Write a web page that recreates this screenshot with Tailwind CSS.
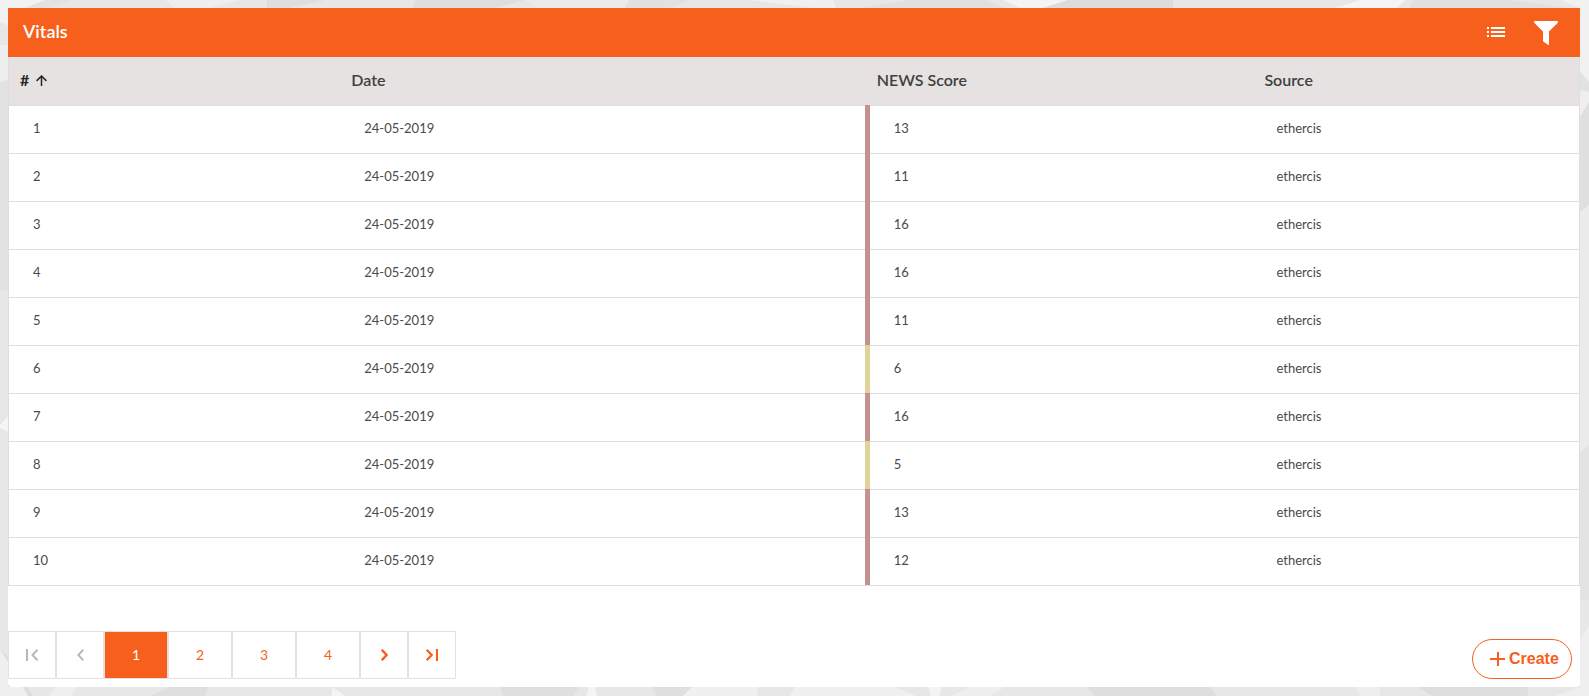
<!DOCTYPE html>
<html lang="en">
<head>
<meta charset="utf-8">
<meta name="viewport" content="width=device-width, initial-scale=1">
<title>Vitals</title>
<script src="https://cdn.jsdelivr.net/npm/@tailwindcss/browser@4"></script>
</head>
<body class="relative isolate min-h-screen bg-[#e7e7e7] p-2 pr-[9px] pb-[9px] font-['Lato',sans-serif] text-[#4a4a4a]">
<!-- Faceted page backdrop -->
<svg class="absolute inset-0 -z-10 h-full w-full opacity-80" viewBox="0 0 1589 696" preserveAspectRatio="none" aria-hidden="true">
  <path fill="#f5f5f5" d="M0 0H73L20 12L12 27L0 22z"/>
  <path fill="#e1e1e1" d="M45 0H73L50 8H25zM0 82L8 79V171L0 182z"/>
  <path fill="#f0f0f0" d="M0 45H8V80L0 82zM165 0H240L210 8H175z"/>
  <path fill="#dcdcdc" d="M267 0H325L290 8H267z"/>
  <path fill="#e2e2e2" d="M0 182L8 171V290H0z"/>
  <path fill="#dcdcdc" d="M415 0H525L495 8H413z"/>
  <path fill="#ededed" d="M527 0H628L625 8H537z"/>
  <path fill="#e0e0e0" d="M630 0H690L670 8H625z"/>
  <path fill="#f3f3f3" d="M750 0H833L836 8H815z"/>
  <path fill="#dfdfdf" d="M910 0H985L1005 8H860z"/>
  <path fill="#f8f8f8" d="M1003 0H1068L1043 8H1020z"/>
  <path fill="#dadada" d="M1068 0H1173V8H1043z"/>
  <path fill="#f9f9f9" d="M1360 0H1405L1397 8H1335z"/>
  <path fill="#dfdfdf" d="M1413 0H1510L1570 8H1410z"/>
  <path fill="#f4f4f4" d="M1560 0H1589V82L1580 72V8z"/>
  <path fill="#e1e1e1" d="M1580 72L1589 82V92L1580 90z"/>
  <path fill="#f2f2f2" d="M1580 90L1589 92V102L1580 117z"/>
  <path fill="#dedede" d="M1580 117L1589 102V205L1580 212z"/>
  <path fill="#eeeeee" d="M1580 212L1589 205V445L1580 453z"/>
  <path fill="#e3e3e3" d="M1580 453L1589 445V600H1580z"/>
  <path fill="#f9f9f9" d="M0 425L8 416V432L0 428z"/>
  <path fill="#f3f3f3" d="M0 649L35 696H0z"/>
  <path fill="#dddddd" d="M0 649L8 657V687H28L34 696H50L55 687H75L65 696H28z"/>
  <path fill="#f1f1f1" d="M55 687H77L71 696H49z"/>
  <path fill="#dedede" d="M170 687H208L205 696H150zM500 687H579L573 696H503zM651 687H692L683 696H657z"/>
  <path fill="#f8f8f8" d="M332 687L345 696H332zM589 687H595L597 696H586zM928 687H942L939 696H931z"/>
  <path fill="#f3f3f3" d="M692 687H758L757 696H683zM795 687H895L916 696H790z"/>
  <path fill="#f0f0f0" d="M970 687H1005L990 696H950zM1355 687H1380V696H1360z"/>
  <path fill="#dddddd" d="M1087 687H1210L1217 696H1095zM1418 687H1529L1527 696H1432z"/>
  <path fill="#f1f1f1" d="M1580 640L1589 625V696H1555L1580 687z"/>
</svg>

<main class="min-h-full overflow-hidden rounded-b bg-white">
  <header class="flex h-[49px] items-center justify-between bg-[#f7601c] pr-[22px] pl-[15px] text-white">
    <h1 class="pb-[3px] text-lg leading-6 font-semibold">Vitals</h1>
    <div class="flex items-center gap-[29px]">
      <button type="button" aria-label="List view">
        <svg class="block h-[11px] w-[18px]" viewBox="0 0 18 11" fill="currentColor" shape-rendering="crispEdges"><path d="M0 0h2v2H0zM0 4h2v2H0zM0 8h2v2H0zM4 0h14v2H4zM4 4h14v2H4zM4 8h14v2H4z"/></svg>
      </button>
      <button type="button" aria-label="Filter">
        <svg class="block h-6 w-6" viewBox="0 0 24 24" fill="currentColor"><path d="M.8 0H23.2Q24.6.6 23.6 2L15 10.600V23.400Q14.700 24.300 13.800 23.700L9.600 20.700Q9 20.200 9 19.500V10.600L.4 2Q-.6.6.8 0z"/></svg>
      </button>
    </div>
  </header>

  <table class="w-full table-fixed border-separate border-spacing-0 border-x border-b border-[#dedede] text-left">
    <colgroup><col class="w-[21.1%]"><col class="w-[33.4%]"><col class="w-[24.7%]"><col></colgroup>
    <thead class="bg-[#e6e2e1] text-base leading-6 text-[#404040]">
      <tr class="h-12">
        <th scope="col" class="p-0 pb-0.5 pl-[11px] font-bold text-[#262626]" aria-sort="ascending">
          <button type="button" class="flex items-center gap-[7px]">#
            <svg class="h-[11px] w-[11px]" viewBox="0 0 11 11" fill="none" stroke="currentColor" stroke-width="1.500"><path d="M5.500 11V1M.6 5.900L5.500 1L10.400 5.900"/></svg>
          </button>
        </th>
        <th scope="col" class="p-0 pb-0.5 pl-[11px] font-semibold">Date</th>
        <th scope="col" class="p-0 pb-0.5 pl-3 font-semibold">NEWS Score</th>
        <th scope="col" class="p-0 pb-0.5 pl-3 font-semibold">Source</th>
      </tr>
    </thead>
    <tbody id="rows" class="text-[13px] leading-5"></tbody>
  </table>

  <footer class="flex items-end justify-between pt-[45px] pr-2 pb-2">
    <nav aria-label="Pages" class="flex text-sm text-[#f7601c]">
      <button type="button" disabled aria-label="First page" class="flex h-12 w-12 items-center justify-center border border-[#e1e1e1] text-[#b8b8b8]">
        <svg class="h-3 w-3" viewBox="0 0 12 12" fill="none" stroke="currentColor" stroke-width="2"><path d="M1 0V12M11.500.8L6.500 6L11.500 11.200"/></svg>
      </button>
      <button type="button" disabled aria-label="Previous page" class="flex h-12 w-12 items-center justify-center border border-[#e1e1e1] text-[#b8b8b8]">
        <svg class="h-3 w-[7px]" viewBox="0 0 7 12" fill="none" stroke="currentColor" stroke-width="2"><path d="M6.300.8L1.300 6L6.300 11.200"/></svg>
      </button>
      <button type="button" aria-current="page" class="h-12 w-16 border border-[#e1e1e1] bg-[#f7601c] text-white">1</button>
      <button type="button" class="h-12 w-16 border border-[#e1e1e1]">2</button>
      <button type="button" class="h-12 w-16 border border-[#e1e1e1]">3</button>
      <button type="button" class="h-12 w-16 border border-[#e1e1e1]">4</button>
      <button type="button" aria-label="Next page" class="flex h-12 w-12 items-center justify-center border border-[#e1e1e1]">
        <svg class="h-3 w-[7px]" viewBox="0 0 7 12" fill="none" stroke="currentColor" stroke-width="2.400"><path d="M.8.8L5.600 6L.8 11.200"/></svg>
      </button>
      <button type="button" aria-label="Last page" class="flex h-12 w-12 items-center justify-center border border-[#e1e1e1]">
        <svg class="h-3 w-3" viewBox="0 0 12 12" fill="none" stroke="currentColor" stroke-width="2.200"><path d="M11 0V12M.7.8L5.700 6L.7 11.200"/></svg>
      </button>
    </nav>
    <button type="button" class="flex h-10 w-[100px] items-center gap-1 rounded-full border border-[#f7601c] pl-[17px] font-['Liberation_Sans',sans-serif] text-base font-bold text-[#f7601c]">
      <svg class="h-[14px] w-[15px] shrink-0" viewBox="0 0 15 14" fill="currentColor" shape-rendering="crispEdges"><path d="M7 0H9V14H7zM0 6H15V8H0z"/></svg>
      Create
    </button>
  </footer>
</main>

<script>
  const scores = [13, 11, 16, 16, 11, 6, 16, 5, 13, 12];
  document.getElementById("rows").innerHTML = scores.map((score, i) => `
    <tr class="h-12">
      <td class="p-0 pb-0.5 pl-6 shadow-[inset_0_1px_#dedede]">${i + 1}</td>
      <td class="p-0 pb-0.5 pl-6 shadow-[inset_0_1px_#dedede]">24-05-2019</td>
      <td class="border-l-5 p-0 pb-0.5 pl-6 shadow-[inset_0_1px_#dedede] ${score > 6 ? "border-[#c59090]" : "border-[#dfd399]"}">${score}</td>
      <td class="p-0 pb-0.5 pl-6 shadow-[inset_0_1px_#dedede]">ethercis</td>
    </tr>`).join("");
</script>
</body>
</html>
